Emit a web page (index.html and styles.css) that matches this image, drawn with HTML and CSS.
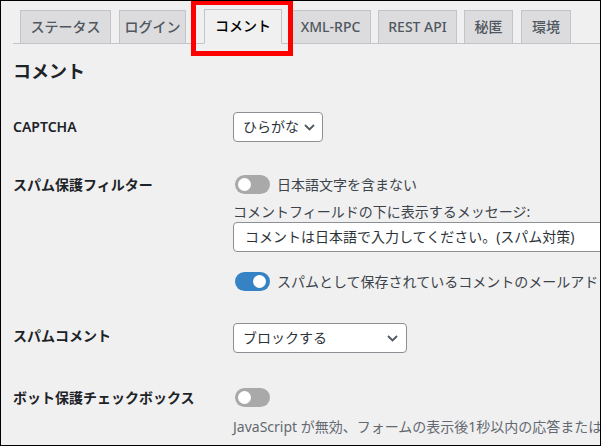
FILE: index.html
```html
<!DOCTYPE html>
<html lang="ja">
<head>
<meta charset="utf-8">
<title>コメント</title>
<link rel="stylesheet" href="styles.css">
</head>
<body>
<div class="frame">
  <div class="wrap">
    <nav class="tabs">
      <span class="tab t-status">ステータス</span>
      <span class="tab t-login">ログイン</span>
      <span class="tab tab-active t-comment">コメント</span>
      <span class="tab t-xml">XML-RPC</span>
      <span class="tab t-rest">REST API</span>
      <span class="tab t-hide">秘匿</span>
      <span class="tab t-env">環境</span>
    </nav>
    <h2 class="title">コメント</h2>
    <div class="form">
      <div class="row">
        <div class="th">CAPTCHA</div>
        <div class="td">
          <div class="select s-captcha"><span>ひらがな</span><svg class="chev" width="11" height="7" viewBox="0 0 11 7"><polyline points="1,1 5.5,5.5 10,1" fill="none" stroke="#50575e" stroke-width="1.8"/></svg></div>
        </div>
      </div>
      <div class="row">
        <div class="th th-toggle">スパム保護フィルター</div>
        <div class="td">
          <div class="tline"><span class="toggle"><span class="knob"></span></span><span>日本語文字を含まない</span></div>
          <div class="msg-label">コメントフィールドの下に表示するメッセージ:</div>
          <div class="input">コメントは日本語で入力してください。(スパム対策)</div>
          <div class="tline tline-gap"><span class="toggle toggle-on"><span class="knob"></span></span><span>スパムとして保存されているコメントのメールアドレスからの投稿をブロックする</span></div>
        </div>
      </div>
      <div class="row">
        <div class="th th-select">スパムコメント</div>
        <div class="td">
          <div class="select s-spam"><span>ブロックする</span><svg class="chev" width="11" height="7" viewBox="0 0 11 7"><polyline points="1,1 5.5,5.5 10,1" fill="none" stroke="#50575e" stroke-width="1.8"/></svg></div>
        </div>
      </div>
      <div class="row">
        <div class="th th-bot">ボット保護チェックボックス</div>
        <div class="td">
          <div class="tline tline-bot"><span class="toggle"><span class="knob"></span></span></div>
          <p class="desc">JavaScript が無効、フォームの表示後1秒以内の応答またはチェックボックスが未チェックの場合はブロックします。</p>
        </div>
      </div>
    </div>
  </div>
  <div class="highlight"></div>
</div>
</body>
</html>
```

FILE: styles.css
```css
* { box-sizing: border-box; }
html, body { margin: 0; padding: 0; background: #f0f0f1; }
body {
  font-family: "Noto Sans", "Noto Sans CJK JP", sans-serif;
  font-size: 14px;
  color: #3c434a;
}
.frame {
  position: relative;
  width: 601px;
  height: 446px;
  border: 1px solid #000;
  overflow: hidden;
  background: #f0f0f1;
}
.wrap { padding-left: 12px; }

.tabs {
  display: flex;
  align-items: flex-end;
  padding-top: 8px;
  border-bottom: 1px solid #c3c4c7;
  height: 43px;
}
.tab {
  display: block;
  height: 34px;
  margin-left: 8px;
  margin-bottom: -1px;
  padding: 4px 0 5px;
  border: 1px solid #c3c4c7;
  background: #dcdcde;
  color: #50575e;
  font-weight: 500;
  font-size: 14px;
  line-height: 24px;
  text-align: center;
  white-space: nowrap;
}
.tab-active {
  background: #f0f0f1;
  color: #000;
  border-bottom-color: #f0f0f1;
  height: 35px;
}
.t-status { width: 91px; margin-left: 7px; }
.t-login { width: 67px; }
.t-comment { width: 78px; margin-left: 18px; }
.t-xml { width: 81px; }
.t-rest { width: 79px; margin-left: 7px; }
.t-hide { width: 49px; margin-left: 7px; }
.t-env { width: 50px; }

.title {
  margin: 15px 0 14px;
  font-size: 18px;
  line-height: 24px;
  font-weight: 600;
  color: #1d2327;
}

.row {
  display: flex;
  padding: 15px 0;
}
.th {
  width: 220px;
  flex: none;
  padding-top: 6px;
  line-height: 18px;
  font-weight: 600;
  color: #1d2327;
}
.th-toggle { padding-top: 4px; }
.th-select { padding-top: 4px; }
.th-bot { padding-top: 6px; }
.td {
  flex: 1;
  white-space: nowrap;
}

.select {
  display: flex;
  align-items: center;
  justify-content: space-between;
  height: 30px;
  padding: 0 7px 0 9px;
  border: 1px solid #8c8f94;
  border-radius: 4px;
  background: #fff;
  color: #2c3338;
  line-height: 20px;
}
.s-captcha { width: 90px; }
.s-spam { width: 174px; padding-right: 8px; }
.chev { display: block; flex: none; }

.tline {
  display: flex;
  align-items: center;
  height: 24px;
  gap: 7px;
  color: #3c434a;
}
.tline-gap { margin-top: 17px; }
.tline-bot { margin-top: 2px; }
.toggle {
  position: relative;
  display: block;
  flex: none;
  width: 35px;
  height: 19px;
  margin-left: 2px;
  border-radius: 10px;
  background: #a9a9a9;
}
.toggle-on { background: #3582c4; }
.knob {
  position: absolute;
  top: 3px;
  left: 3px;
  width: 13px;
  height: 13px;
  border-radius: 50%;
  background: #fff;
}
.toggle-on .knob { left: auto; right: 4px; }

.msg-label {
  margin-top: 6px;
  height: 20px;
  line-height: 20px;
}
.input {
  width: 420px;
  height: 30px;
  padding: 0 11px;
  border: 1px solid #8c8f94;
  border-radius: 4px;
  background: #fff;
  color: #2c3338;
  line-height: 28px;
}
.desc {
  margin: 8px 0 0;
  line-height: 20px;
  color: #646970;
}

.highlight {
  position: absolute;
  top: -1px;
  left: 190px;
  width: 102px;
  height: 56px;
  border: 5px solid #f00;
}
```
